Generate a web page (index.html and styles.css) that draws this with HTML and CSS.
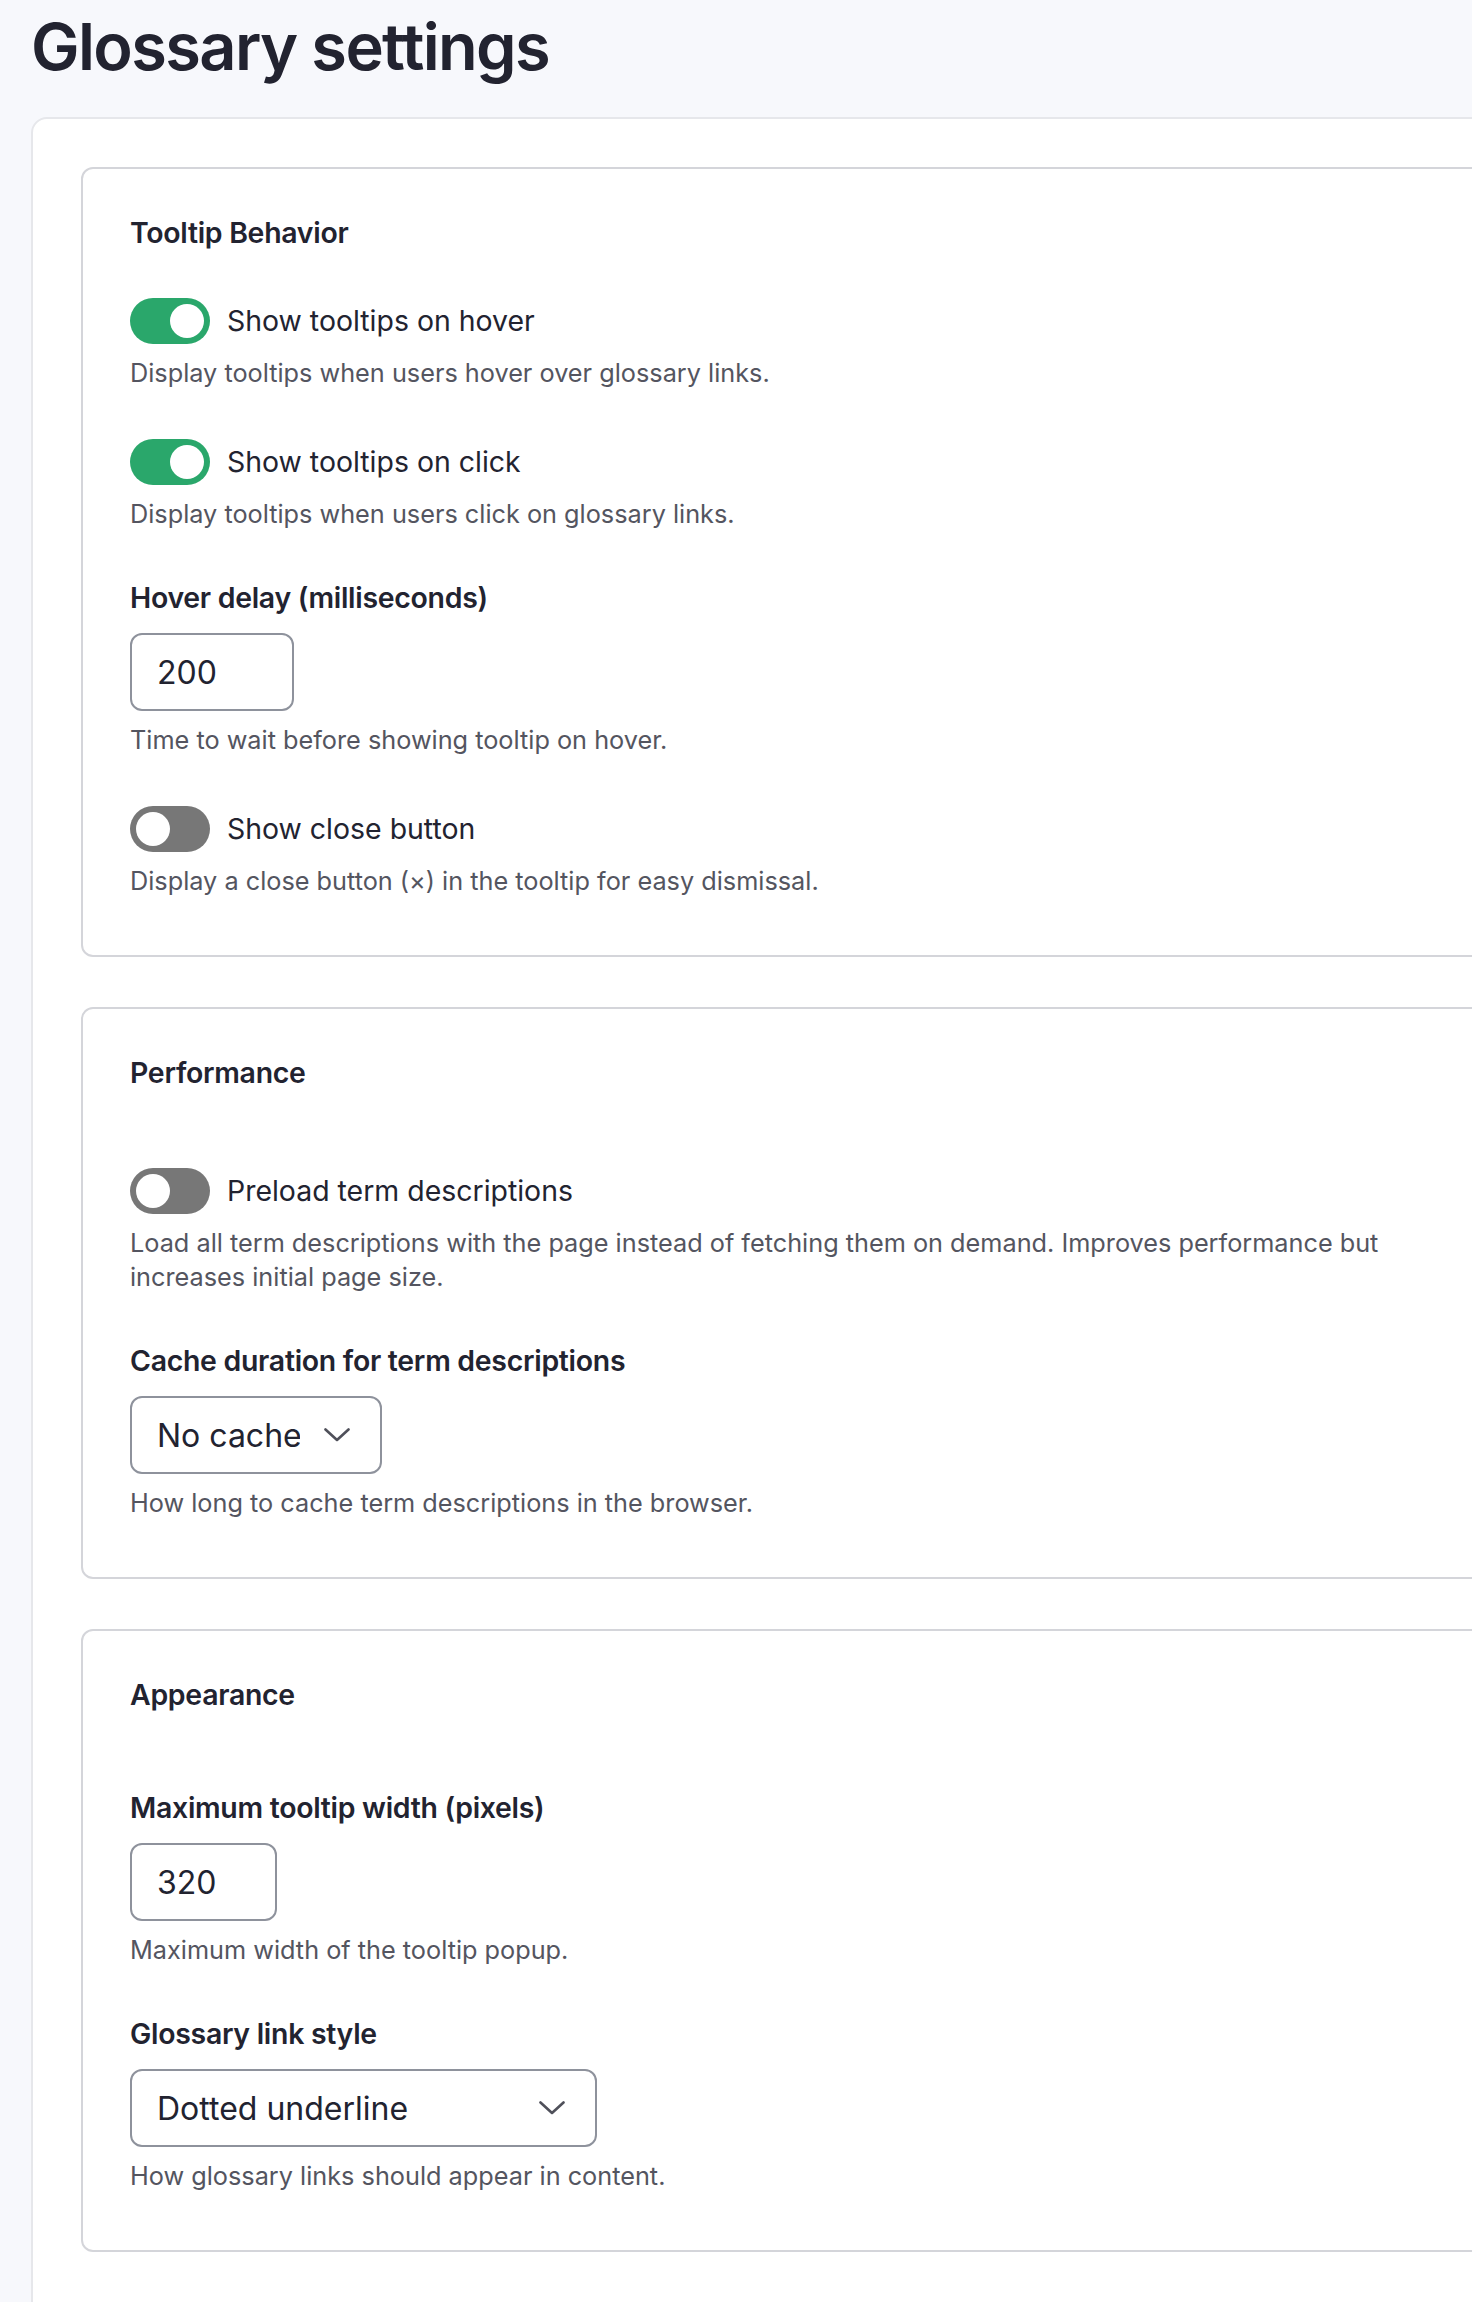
FILE: index.html
```html
<!DOCTYPE html>
<html lang="en">
<head>
    <meta charset="UTF-8">
    <meta name="viewport" content="width=device-width, initial-scale=1.0">
    <title>Glossary settings</title>
    <link rel="stylesheet" href="styles.css">
</head>
<body>
    <main class="page">
        <h1 class="page-title">Glossary settings</h1>

        <form class="settings-card">
            <!-- Tooltip behavior -->
            <section class="group">
                <h2 class="group-title">Tooltip Behavior</h2>
                <div class="group-body">
                    <div class="form-item">
                        <label class="switch-row">
                            <input type="checkbox" class="switch-input" checked>
                            <span class="switch"><span class="knob"></span></span>
                            <span class="switch-label">Show tooltips on hover</span>
                        </label>
                        <div class="form-desc">Display tooltips when users hover over glossary links.</div>
                    </div>
                    <div class="form-item">
                        <label class="switch-row">
                            <input type="checkbox" class="switch-input" checked>
                            <span class="switch"><span class="knob"></span></span>
                            <span class="switch-label">Show tooltips on click</span>
                        </label>
                        <div class="form-desc">Display tooltips when users click on glossary links.</div>
                    </div>
                    <div class="form-item">
                        <label class="form-label" for="hover-delay">Hover delay (milliseconds)</label>
                        <input id="hover-delay" class="text-input text-input--delay" type="text" value="200">
                        <div class="form-desc">Time to wait before showing tooltip on hover.</div>
                    </div>
                    <div class="form-item">
                        <label class="switch-row">
                            <input type="checkbox" class="switch-input">
                            <span class="switch"><span class="knob"></span></span>
                            <span class="switch-label">Show close button</span>
                        </label>
                        <div class="form-desc">Display a close button (×) in the tooltip for easy dismissal.</div>
                    </div>
                </div>
            </section>

            <!-- Performance -->
            <section class="group">
                <h2 class="group-title">Performance</h2>
                <div class="group-body group-body--spaced">
                    <div class="form-item">
                        <label class="switch-row">
                            <input type="checkbox" class="switch-input">
                            <span class="switch"><span class="knob"></span></span>
                            <span class="switch-label">Preload term descriptions</span>
                        </label>
                        <div class="form-desc">Load all term descriptions with the page instead of fetching them on demand. Improves performance but increases initial page size.</div>
                    </div>
                    <div class="form-item">
                        <label class="form-label" for="cache-duration">Cache duration for term descriptions</label>
                        <div class="select-wrap select-wrap--short">
                            <select id="cache-duration" class="select">
                                <option>No cache</option>
                                <option>1 hour</option>
                                <option>1 day</option>
                            </select>
                            <svg class="chevron" width="26" height="14" viewBox="0 0 26 14"><polyline points="1.5,1.5 13,12 24.5,1.5" fill="none" stroke="currentColor" stroke-width="2.6" stroke-linecap="round" stroke-linejoin="round"/></svg>
                        </div>
                        <div class="form-desc">How long to cache term descriptions in the browser.</div>
                    </div>
                </div>
            </section>

            <!-- Appearance -->
            <section class="group">
                <h2 class="group-title">Appearance</h2>
                <div class="group-body group-body--spaced">
                    <div class="form-item">
                        <label class="form-label" for="max-width">Maximum tooltip width (pixels)</label>
                        <input id="max-width" class="text-input text-input--width" type="text" value="320">
                        <div class="form-desc">Maximum width of the tooltip popup.</div>
                    </div>
                    <div class="form-item">
                        <label class="form-label" for="link-style">Glossary link style</label>
                        <div class="select-wrap select-wrap--wide">
                            <select id="link-style" class="select">
                                <option>Dotted underline</option>
                                <option>Solid underline</option>
                                <option>Highlight</option>
                            </select>
                            <svg class="chevron" width="26" height="14" viewBox="0 0 26 14"><polyline points="1.5,1.5 13,12 24.5,1.5" fill="none" stroke="currentColor" stroke-width="2.6" stroke-linecap="round" stroke-linejoin="round"/></svg>
                        </div>
                        <div class="form-desc">How glossary links should appear in content.</div>
                    </div>
                </div>
            </section>
        </form>
    </main>
</body>
</html>
```

FILE: styles.css
```css
html {
    overflow-x: hidden;
}
body {
    margin: 0;
    font-family: Inter, 'Noto Sans', 'Liberation Sans', sans-serif;
    color: #222330;
    background-color: #f7f8fc;
}
.page {
    width: 1700px;
    padding: 6px 0 0 31px;
}
.page-title {
    margin: 0 0 30px;
    font-size: 64.9px;
    line-height: 81px;
    font-weight: 600;
    letter-spacing: -0.025em;
    color: #222330;
}
.settings-card {
    background-color: #ffffff;
    border: 2px solid #e6e7eb;
    border-radius: 16px;
    padding: 48px 48px 120px;
}
.group {
    border: 2px solid #d4d5da;
    border-radius: 12px;
    padding: 46px 47px 57px;
    margin-bottom: 50px;
}
.group-title {
    margin: 0;
    font-size: 28.44px;
    line-height: 36px;
    font-weight: 600;
    letter-spacing: -0.01em;
}
.group-body {
    padding-top: 47px;
}
.group-body--spaced {
    padding-top: 77px;
}
.form-item + .form-item {
    margin-top: 49px;
}
.form-label {
    display: block;
    margin-bottom: 17px;
    font-size: 28.44px;
    line-height: 36px;
    font-weight: 600;
    letter-spacing: -0.01em;
}
.form-desc {
    max-width: 1310px;
    margin-top: 12px;
    font-size: 25.28px;
    line-height: 34px;
    color: #545560;
}

/* toggles */
.switch-row {
    display: flex;
    align-items: center;
    gap: 17px;
    cursor: pointer;
}
.switch-input {
    display: none;
}
.switch {
    position: relative;
    flex: none;
    width: 80px;
    height: 46px;
    border-radius: 23px;
    background-color: #777777;
}
.knob {
    position: absolute;
    top: 6px;
    left: 6px;
    width: 34px;
    height: 34px;
    border-radius: 50%;
    background-color: #ffffff;
}
.switch-input:checked + .switch {
    background-color: #2aa76b;
}
.switch-input:checked + .switch .knob {
    left: 40px;
}
.switch-label {
    font-size: 28.44px;
    line-height: 36px;
}

/* text fields and selects */
.text-input,
.select {
    box-sizing: border-box;
    height: 78px;
    margin: 0;
    border: 2px solid #8e929c;
    border-radius: 12px;
    background-color: #ffffff;
    font-family: inherit;
    font-size: 32px;
    color: #222330;
    outline: none;
}
.text-input {
    display: block;
    padding: 0 25px;
}
.text-input--delay {
    width: 164px;
}
.text-input--width {
    width: 147px;
}
.select-wrap {
    position: relative;
}
.select-wrap--short {
    width: 252px;
}
.select-wrap--wide {
    width: 467px;
}
.select {
    display: block;
    width: 100%;
    padding: 0 80px 0 25px;
    appearance: none;
    -webkit-appearance: none;
}
.chevron {
    position: absolute;
    top: 32px;
    right: 32px;
    color: #4f505a;
    pointer-events: none;
}
```
